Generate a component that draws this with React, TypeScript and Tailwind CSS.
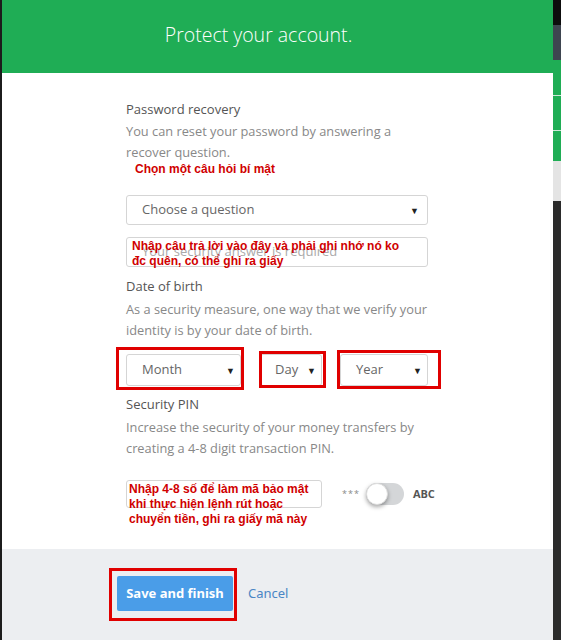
import React from "react";

const Arrow = () => (
  <span className="text-[9px] text-[#222] leading-none">▼</span>
);

function Select({ label, className }: { label: string; className: string }) {
  return (
    <div
      className={`flex items-center justify-between border border-[#d5d5d5] rounded-[3px] bg-white pl-[15px] pr-[5px] text-[13px] text-[#666] ${className}`}
    >
      <span>{label}</span>
      <Arrow />
    </div>
  );
}

export default function App() {
  const red = "text-[#d00000] font-bold text-[12px] leading-[15px] [font-family:'Liberation_Sans',Arial,sans-serif]";
  const desc = "text-[12.8px] leading-[21px] text-[#888]";
  return (
    <div className="w-[561px] h-[640px] bg-[#2b2b2b] flex overflow-hidden [font-family:'Open_Sans',sans-serif]">
      <div className="w-[2px] bg-[#1c1c1c]" />
      <div className="w-[551px] flex flex-col">
        <div className="h-[73px] bg-[#1fad55] flex items-center justify-center pr-[38px] pb-[4px]">
          <h1 className="text-white text-[19.5px] font-light">Protect your account.</h1>
        </div>
        <div className="h-[476px] bg-white pt-[26px] pl-[124px]">
          <div className="w-[304px]">
            <div className="text-[13px] leading-[20px] text-[#555]">Password recovery</div>
            <p className={`mt-[2px] ${desc}`}>
              You can reset your password by answering a recover question.
            </p>
            <div className={`${red} ml-[9px] -mt-[1px]`}>Chọn một câu hỏi bí mật</div>
            <Select label="Choose a question" className="mt-[18px] h-[30px] w-[302px] !pr-[8px]" />
            <div className="relative mt-[12px] h-[30px] w-[302px] border border-[#d5d5d5] rounded-[3px] pl-[15px] flex items-center text-[13px] text-[#aaa]">
              <span>Your security answer is required</span>
              <div className={`${red} absolute left-[5px] top-[1px] whitespace-nowrap`}>
                Nhập câu trả lời vào đây và phải ghi nhớ nó ko
                <br />
                đc quên, có thể ghi ra giấy
              </div>
            </div>
            <div className="mt-[9px] text-[13px] leading-[20px] text-[#555]">Date of birth</div>
            <p className={`mt-[3px] ${desc}`}>
              As a security measure, one way that we verify your identity is by your date of birth.
            </p>
            <div className="relative mt-[13px] flex h-[32px]">
              <Select label="Month" className="w-[115px] h-[32px]" />
              <Select label="Day" className="ml-[19px] w-[62px] h-[32px] !pl-[14px] !pr-[5px]" />
              <Select label="Year" className="ml-[18px] w-[88px] h-[32px]" />
              <span className="absolute left-[-10px] top-[-7px] w-[128px] h-[43px] border-[3px] border-[#e00000]" />
              <span className="absolute left-[133px] top-[-3px] w-[67px] h-[37px] border-[3px] border-[#e00000]" />
              <span className="absolute left-[211px] top-[-4px] w-[104px] h-[39px] border-[3px] border-[#e00000]" />
            </div>
            <div className="mt-[8px] text-[13px] leading-[20px] text-[#555]">Security PIN</div>
            <p className={`mt-[3px] ${desc}`}>
              Increase the security of your money transfers by creating a 4-8 digit transaction PIN.
            </p>
            <div className="mt-[21px] flex items-start">
              <div className="relative shrink-0 w-[196px] h-[28px] border border-[#d5d5d5] rounded-[3px]">
                <div className={`${red} absolute left-[2px] top-[1px] whitespace-nowrap leading-[15.5px]`}>
                  Nhập 4-8 số để làm mã bảo mật
                  <br />
                  khi thực hiện lệnh rút hoặc
                  <br />
                  chuyển tiền, ghi ra giấy mã này
                </div>
              </div>
              <div className="ml-[20px] mt-[3px] flex items-center shrink-0">
                <span className="text-[9px] text-[#888] tracking-[1px]">***</span>
                <div className="ml-[6px] relative w-[38px] h-[22px] rounded-full bg-[#d4d6d8]">
                  <div className="absolute left-0 top-0 w-[22px] h-[22px] rounded-full bg-white shadow-[0_2px_4px_rgba(0,0,0,0.35)] border border-[#ddd]" />
                </div>
                <span className="ml-[9px] text-[11px] font-bold text-[#555]">ABC</span>
              </div>
            </div>
          </div>
        </div>
        <div className="flex-1 bg-[#eceef1] pl-[107px] pt-[19px]">
          <div className="flex items-center">
            <div className="border-[3px] border-[#e00000] pl-[5px] pr-[1px] pt-[5px] pb-[7px]">
              <button className="w-[116px] h-[35px] bg-[#4a9de8] rounded-[2px] text-white text-[13px] font-bold [font-family:'Noto_Sans',sans-serif]">
                Save and finish
              </button>
            </div>
            <span className="ml-[11px] -mt-[2px] text-[13px] text-[#4a86c5] [font-family:'Noto_Sans',sans-serif]">Cancel</span>
          </div>
        </div>
      </div>
      <div className="w-[8px] flex flex-col">
        <div className="h-[25px] bg-[#0d0d0d]" />
        <div className="h-[35px] bg-[#3e4550]" />
        <div className="h-[35px] bg-[#1fad55]" />
        <div className="h-[1px] bg-[#cfe8d8]" />
        <div className="h-[34px] bg-[#1fad55]" />
        <div className="h-[1px] bg-[#cfe8d8]" />
        <div className="h-[30px] bg-[#1fad55]" />
        <div className="h-[40px] bg-[#e4e4e4]" />
        <div className="flex-1 bg-[#2b2b2b]" />
      </div>
    </div>
  );
}
